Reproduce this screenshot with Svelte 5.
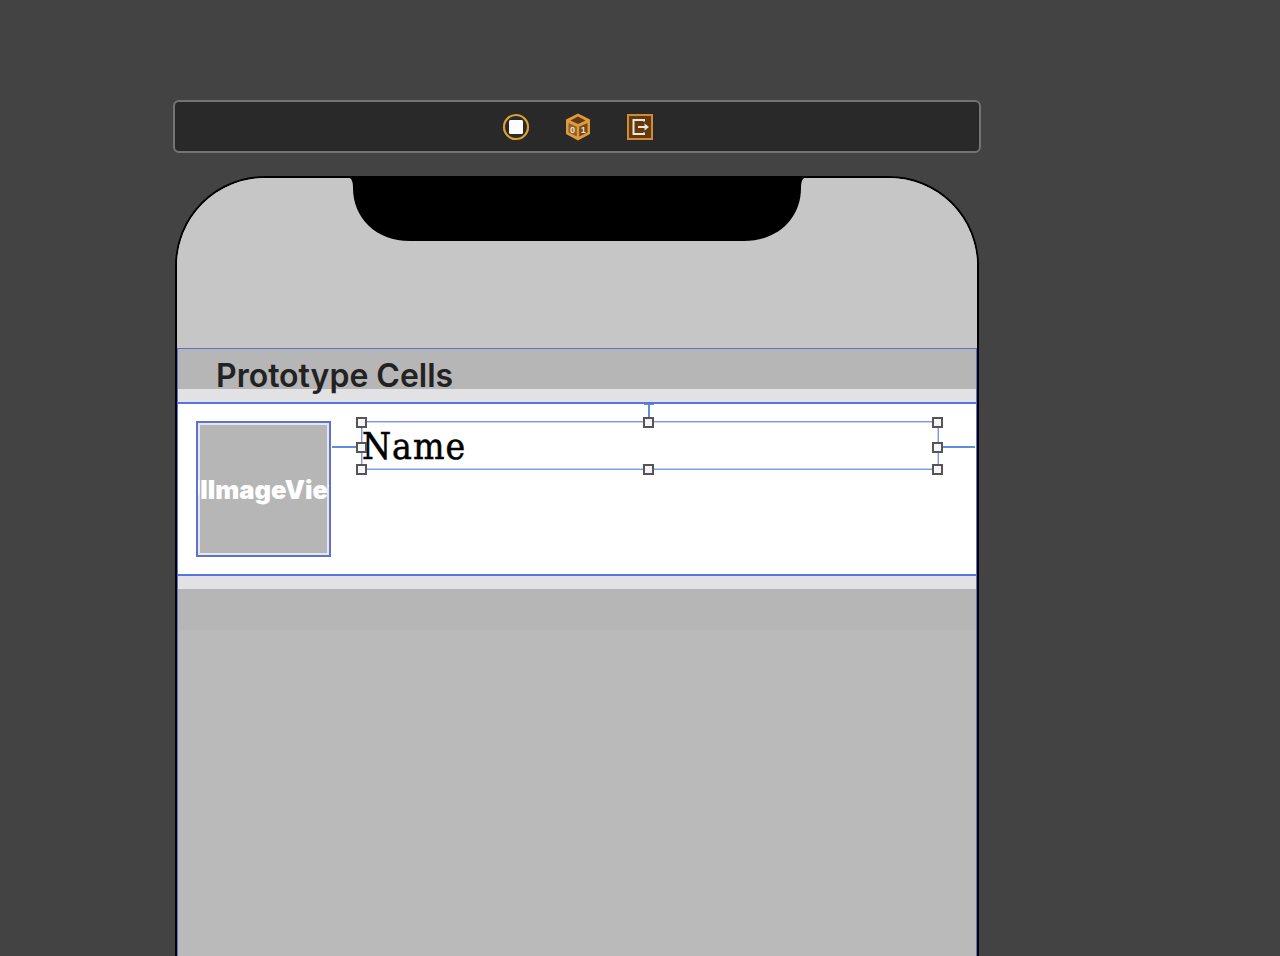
<script>
  const handles = [
    ['0%', '0%'], ['49.8%', '0%'], ['100%', '0%'],
    ['0%', '53%'], ['100%', '53%'],
    ['0%', '100%'], ['49.8%', '100%'], ['100%', '100%']
  ]
</script>

<div class="canvas">
  <div class="scene-bar">
    <svg class="icon" width="28" height="28" viewBox="0 0 28 28">
      <circle cx="14" cy="14" r="12" fill="#2a2a2a" stroke="#d9a32e" stroke-width="2.2" />
      <rect x="7" y="7" width="14" height="14" rx="1.5" fill="#fdfdfd" />
    </svg>
    <svg class="icon" width="28" height="28" viewBox="0 0 28 28">
      <path d="M14 0.5 26 6.5V21L14 27.5 2 21V6.5Z" fill="#e09a3c" />
      <path d="M14 3.5 21.5 7.5 14 11 6.5 7.5Z" fill="#5e3a12" />
      <path d="M4.5 10 12.8 13.8V23.5L4.5 19.5Z" fill="#8f6029" />
      <path d="M23.5 10 15.2 13.8V23.5L23.5 19.5Z" fill="#74481a" />
      <text x="8.6" y="20" class="bit">0</text>
      <text x="19.3" y="20" class="bit">1</text>
    </svg>
    <svg class="icon" width="28" height="28" viewBox="0 0 28 28">
      <rect x="2" y="2" width="24" height="24" fill="#63390f" stroke="#d08a38" stroke-width="2" />
      <path d="M18 8.5V7H7.5V21H18V19.5" fill="none" stroke="#efe6da" stroke-width="2" />
      <path d="M12 14H19" stroke="#efe6da" stroke-width="2" />
      <path d="M18.5 10.5 23 14 18.5 17.5Z" fill="#efe6da" />
    </svg>
  </div>

  <div class="phone">
    <svg class="notch" width="470" height="66" viewBox="0 0 470 66">
      <path d="M0 0H470C460 0 459 5 459 12C459 42 436 65 402 65H68C34 65 11 42 11 12C11 5 10 0 0 0Z" fill="#000" />
    </svg>
    <div class="safe-top"></div>
    <div class="table">
      <div class="section-head">Prototype Cells</div>
      <div class="strip"></div>
      <div class="cell">
        <div class="image-view"><span>UIImageView</span></div>
        <div class="name-label">
          <span class="name">Name</span>
          <i class="pin pin-left"></i>
          <i class="pin pin-right"></i>
          <i class="pin pin-top"></i>
          {#each handles as [x, y]}
            <i class="handle" style="left: {x}; top: {y}"></i>
          {/each}
        </div>
      </div>
      <div class="strip"></div>
      <div class="section-foot"></div>
    </div>
  </div>
</div>

<style>
  :global(body) {
    background: #434343;
    overflow: hidden;
  }
  .canvas {
    height: 956px;
    overflow: hidden;
    padding: 100px 0 0 173px;
    box-sizing: border-box;
    background: #434343;
  }
  .scene-bar {
    box-sizing: border-box;
    width: 808px;
    height: 53px;
    padding-left: 2px;
    display: flex;
    align-items: center;
    justify-content: center;
    gap: 34px;
    background: #292929;
    border: 2px solid #747474;
    border-radius: 6px;
  }
  .icon {
    display: block;
  }
  .bit {
    font-family: "Liberation Sans", sans-serif;
    font-size: 9px;
    font-weight: 700;
    fill: #f1e4d0;
    text-anchor: middle;
  }
  .phone {
    position: relative;
    box-sizing: border-box;
    width: 804px;
    height: 900px;
    margin: 23px 0 0 2px;
    border: 2px solid #000;
    border-radius: 90px 90px 0 0;
    background: #bababa;
    overflow: hidden;
  }
  .notch {
    position: absolute;
    top: -2px;
    left: 165px;
    display: block;
  }
  .safe-top {
    height: 170px;
    background: #c6c6c6;
  }
  .table {
    box-sizing: border-box;
    height: 730px;
    border-top: 1px solid #5a70cf;
    border-left: 1px solid #5a70cf;
    border-right: 1px solid #5a70cf;
  }
  .section-head {
    position: relative;
    z-index: 1;
    box-sizing: border-box;
    height: 40px;
    padding-left: 38px;
    background: #b6b6b6;
    color: #222;
    font-family: Inter, sans-serif;
    font-size: 32px;
    font-weight: 600;
    line-height: 54px;
  }
  .strip {
    height: 13px;
    background: #e2e2e4;
  }
  .cell {
    box-sizing: border-box;
    height: 174px;
    margin: 0 -1px;
    padding: 17px 37px 0 18px;
    display: flex;
    align-items: flex-start;
    gap: 30px;
    background: #fff;
    border: 2px solid #5674e2;
    border-left-width: 1px;
    border-right-width: 1px;
  }
  .image-view {
    box-sizing: border-box;
    flex: none;
    width: 135px;
    height: 136px;
    display: flex;
    align-items: center;
    justify-content: center;
    overflow: hidden;
    background: #b6b6b6;
    border: 2px solid #5f73cc;
    box-shadow: inset 0 0 0 2px #e6e6ee;
  }
  .image-view span {
    color: #fff;
    font-family: Inter, sans-serif;
    font-size: 25.5px;
    font-weight: 900;
    white-space: nowrap;
    padding-left: 5px;
  }
  .name-label {
    position: relative;
    box-sizing: border-box;
    flex: 1;
    height: 49px;
    border: 1px solid #7f97ea;
    box-shadow: inset 0 0 0 1px #c4d0f6;
  }
  .name {
    display: block;
    font-family: "DejaVu Serif Condensed", "DejaVu Serif", serif;
    font-size: 37px;
    line-height: 50px;
    color: #000;
    letter-spacing: 1px;
    -webkit-text-stroke: 0.5px #000;
  }
  .handle {
    position: absolute;
    box-sizing: border-box;
    width: 11px;
    height: 11px;
    margin: -5px 0 0 -6px;
    background: #f6f6f8;
    border: 2px solid #555;
  }
  .pin {
    position: absolute;
    background: #5c8fdc;
  }
  .pin-left {
    left: -30px;
    top: 24px;
    width: 30px;
    height: 2px;
  }
  .pin-right {
    right: -37px;
    top: 24px;
    width: 36px;
    height: 2px;
  }
  .pin-top {
    left: 49.8%;
    top: -18px;
    width: 2px;
    height: 17px;
    margin-left: -1px;
  }
  .pin-top::before {
    content: "";
    position: absolute;
    top: 0;
    left: -4px;
    width: 10px;
    height: 1px;
    background: #5c8fdc;
  }
  .section-foot {
    height: 41px;
    background: #b6b6b6;
  }
</style>
